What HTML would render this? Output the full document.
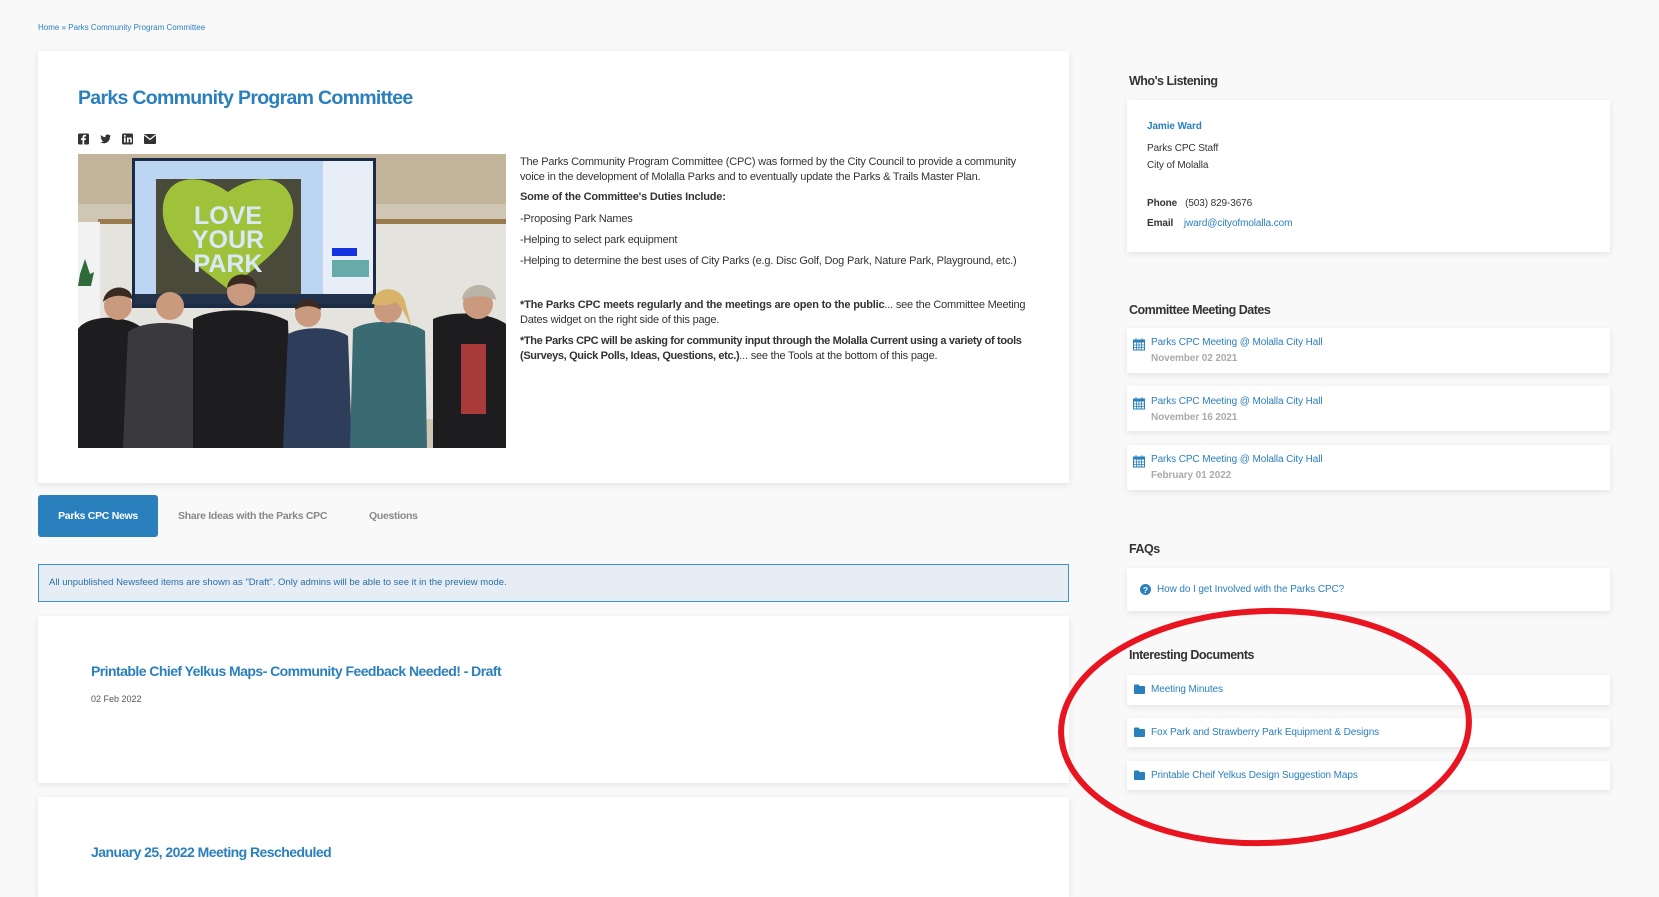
<!DOCTYPE html>
<html><head><meta charset="utf-8"><style>
*{margin:0;padding:0;box-sizing:border-box}
body{width:1659px;height:883px;background:#f9f9f9;font-family:"Liberation Sans",sans-serif;position:relative;overflow:hidden;color:#333}
.a{position:absolute;white-space:nowrap}
.card{position:absolute;background:#fff;box-shadow:0 2px 6px rgba(0,0,0,.09)}
.blue{color:#2a7fbd}
.h{font-size:12.5px;font-weight:bold;color:#333;letter-spacing:-.5px}
.t{font-size:11px;color:#333;letter-spacing:-.2px}
.rl{font-size:10px;letter-spacing:-.1px}
</style></head><body>
<div class="a blue" style="left:38px;top:23px;font-size:8px">Home » Parks Community Program Committee</div>

<div class="card" style="left:38px;top:51px;width:1031px;height:432px"></div>
<div class="a blue" style="left:78px;top:87px;font-size:19.5px;font-weight:bold;letter-spacing:-.7px">Parks Community Program Committee</div>
<svg class="a" style="left:78px;top:133px" width="80" height="12" viewBox="0 0 80 12">
<rect x="0" y="0.5" width="11" height="11" rx="1.5" fill="#333"/><path d="M6.2 11.5V7h1.5l.3-1.7H6.2v-1c0-.5.2-.8.8-.8H8V2c-.3 0-.8-.1-1.3-.1-1.4 0-2.2.8-2.2 2.2v1.2H3V7h1.5v4.5z" fill="#fff"/>
<path d="M33 2.5c-.4.2-.9.3-1.3.4.5-.3.8-.7 1-1.2-.4.3-.9.4-1.4.5a2.2 2.2 0 0 0-3.8 2C25.6 4.1 24 3.3 23 2c-.6 1-.3 2.200.7 2.9-.4 0-.7-.1-1-.3 0 1.1.8 2 1.8 2.2-.3.1-.7.1-1 0 .3.9 1.1 1.5 2.1 1.5-.9.7-2.1 1.1-3.3 1 1 .6 2.2 1 3.4 1 4.1 0 6.4-3.5 6.3-6.6.4-.3.8-.7 1-1.2z" fill="#333"/>
<rect x="44" y="0.5" width="11" height="11" rx="1.5" fill="#333"/><rect x="46" y="4.5" width="1.6" height="5" fill="#fff"/><circle cx="46.8" cy="2.9" r="1" fill="#fff"/><path d="M49 4.5h1.5v.8c.3-.5.9-.9 1.7-.9 1.3 0 1.6.8 1.6 2v3.1h-1.6V6.8c0-.6-.1-1.1-.7-1.1s-.9.4-.9 1.1v2.7H49z" fill="#fff"/>
<rect x="66" y="1" width="12" height="10" rx="1" fill="#333"/><path d="M66.5 2l5.5 4.5L77.5 2" stroke="#fff" stroke-width="1.2" fill="none"/>
</svg>

<svg class="a" style="left:78px;top:154px" width="428" height="294" viewBox="0 0 428 294">
<rect width="428" height="294" fill="#cfc6b4"/>
<rect x="0" y="0" width="428" height="50" fill="#c2b59c"/>
<rect x="20" y="65" width="408" height="200" fill="#e4e3de"/>
<rect x="20" y="65" width="408" height="5" fill="#9b7a50"/>
<rect x="0" y="68" width="22" height="120" fill="#f2f2f2"/>
<path d="M2 120l5-15 5 15 4-2-3 14H0z" fill="#2e6a3a"/>
<rect x="54" y="4" width="244" height="150" fill="#1c2b44"/>
<rect x="57" y="7" width="238" height="143" fill="#bcd5f2"/>
<rect x="245" y="7" width="50" height="135" fill="#e8eef8"/>
<rect x="254" y="94" width="25" height="8" fill="#1432e0"/>
<rect x="254" y="106" width="37" height="17" fill="#6aa"/>
<rect x="78" y="25" width="145" height="115" fill="#4a4a3a"/>
<path d="M150 135C110 105 82 85 85 52c3-30 35-35 65-14 30-21 62-16 65 14 3 33-25 53-65 83z" fill="#9fc23a"/>
<text x="150" y="70" text-anchor="middle" font-family="Liberation Sans" font-weight="bold" font-size="25" fill="#dbe8f8">LOVE</text>
<text x="150" y="94" text-anchor="middle" font-family="Liberation Sans" font-weight="bold" font-size="25" fill="#dbe8f8">YOUR</text>
<text x="150" y="118" text-anchor="middle" font-family="Liberation Sans" font-weight="bold" font-size="25" fill="#dbe8f8">PARK</text>
<rect x="57" y="140" width="238" height="10" fill="#22324a"/>
<g fill="#1d1d20">
<path d="M0 175c10-15 50-15 65 0v119H0z"/>
<path d="M50 178c15-12 55-12 70 0l5 116H45z" fill="#3a3a3d"/>
<path d="M115 165c20-12 70-12 95 2l4 127H115z"/>
<path d="M210 180c15-8 45-8 60 2l4 112H205z" fill="#2d3d5a"/>
<path d="M275 175c15-10 55-10 72 2l2 117H272z" fill="#3b6b72"/>
<path d="M355 165c18-8 55-8 73 5v124H355z"/>
</g>
<g fill="#c99a7e"><circle cx="40" cy="152" r="14"/><circle cx="92" cy="152" r="14"/><circle cx="163" cy="138" r="14"/><circle cx="230" cy="160" r="13"/><circle cx="310" cy="155" r="14"/><circle cx="400" cy="150" r="15"/></g>
<g fill="#3a2a22"><path d="M25 148c2-18 28-20 30-2-8-6-22-6-30 2z"/><path d="M149 134c2-18 28-18 30 0-10-6-20-6-30 0z"/><path d="M217 156c2-14 24-14 26 0-8-5-18-5-26 0z"/></g>
<g fill="#d8b46a"><path d="M294 150c2-20 32-20 34 2l6 22c-6-12-10-20-16-26-8 4-16 4-24 2z"/></g>
<g fill="#b9b3a8"><path d="M384 146c2-20 32-20 34 0-10-5-24-5-34 0z"/></g>
<rect x="383" y="190" width="25" height="70" fill="#a83a3a"/>
</svg>

<div class="a t" style="left:520px;top:155px;line-height:15px">The Parks Community Program Committee (CPC) was formed by the City Council to provide a community<br>voice in the development of Molalla Parks and to eventually update the Parks &amp; Trails Master Plan.</div>
<div class="a t" style="left:520px;top:191px;font-weight:bold">Some of the Committee's Duties Include:</div>
<div class="a t" style="left:520px;top:213px">-Proposing Park Names</div>
<div class="a t" style="left:520px;top:234px">-Helping to select park equipment</div>
<div class="a t" style="left:520px;top:255px">-Helping to determine the best uses of City Parks (e.g. Disc Golf, Dog Park, Nature Park, Playground, etc.)</div>
<div class="a t" style="left:520px;top:298px;line-height:15px"><b>*The Parks CPC meets regularly and the meetings are open to the public</b>... see the Committee Meeting<br>Dates widget on the right side of this page.</div>
<div class="a t" style="left:520px;top:334px;line-height:15px"><b style="letter-spacing:-.35px">*The Parks CPC will be asking for community input through the Molalla Current using a variety of tools<br>(Surveys, Quick Polls, Ideas, Questions, etc.)</b>... see the Tools at the bottom of this page.</div>

<div class="a" style="left:38px;top:495px;width:120px;height:42px;background:#2a7fbd;border-radius:3px;color:#fff;font-size:10.5px;font-weight:bold;text-align:center;line-height:42px;letter-spacing:-.3px">Parks CPC News</div>
<div class="a" style="left:178px;top:495px;line-height:42px;font-size:10.5px;font-weight:bold;color:#888;letter-spacing:-.3px">Share Ideas with the Parks CPC</div>
<div class="a" style="left:369px;top:495px;line-height:42px;font-size:10.5px;font-weight:bold;color:#888;letter-spacing:-.3px">Questions</div>

<div class="a" style="left:38px;top:564px;width:1031px;height:38px;background:#e6edf4;border:1px solid #3d8fd6;font-size:9.5px;line-height:36px;padding-left:10px;color:#2a6fa8">All unpublished Newsfeed items are shown as "Draft". Only admins will be able to see it in the preview mode.</div>

<div class="card" style="left:38px;top:616px;width:1031px;height:167px"></div>
<div class="a blue" style="left:91px;top:663px;font-size:14px;font-weight:bold;letter-spacing:-.55px">Printable Chief Yelkus Maps- Community Feedback Needed! - Draft</div>
<div class="a" style="left:91px;top:694px;font-size:9px;color:#555">02 Feb 2022</div>
<div class="card" style="left:38px;top:797px;width:1031px;height:100px"></div>
<div class="a blue" style="left:91px;top:844px;font-size:14px;font-weight:bold;letter-spacing:-.55px">January 25, 2022 Meeting Rescheduled</div>

<div class="a h" style="left:1129px;top:74px">Who's Listening</div>
<div class="card" style="left:1127px;top:100px;width:483px;height:152px"></div>
<div class="a blue rl" style="left:1147px;top:121px;font-weight:bold">Jamie Ward</div>
<div class="a rl" style="left:1147px;top:143px">Parks CPC Staff</div>
<div class="a rl" style="left:1147px;top:160px">City of Molalla</div>
<div class="a rl" style="left:1147px;top:198px"><b>Phone</b>&nbsp;&nbsp; (503) 829-3676</div>
<div class="a rl" style="left:1147px;top:218px"><b>Email</b>&nbsp;&nbsp;&nbsp; <span class="blue">jward@cityofmolalla.com</span></div>

<div class="a h" style="left:1129px;top:303px">Committee Meeting Dates</div>
<div class="card" style="left:1127px;top:328px;width:483px;height:45px"></div>
<div class="card" style="left:1127px;top:386px;width:483px;height:45px"></div>
<div class="card" style="left:1127px;top:445px;width:483px;height:45px"></div>
<svg width="0" height="0" style="position:absolute"><defs><g id="cal"><rect x="0.5" y="2" width="11" height="10" fill="none" stroke="#2a7fbd"/><rect x="0.5" y="2" width="11" height="2.5" fill="#2a7fbd"/><path d="M3 0v3M9 0v3M0.5 7h11M0.5 9.5h11M3.5 4.5v7.5M6 4.5v7.5M8.5 4.5v7.5" stroke="#2a7fbd" stroke-width=".8"/></g></defs></svg>
<svg class="a" style="left:1133px;top:338px" width="13" height="13"><use href="#cal"/></svg>
<svg class="a" style="left:1133px;top:397px" width="13" height="13"><use href="#cal"/></svg>
<svg class="a" style="left:1133px;top:455px" width="13" height="13"><use href="#cal"/></svg>
<div class="a blue rl" style="left:1151px;top:337px">Parks CPC Meeting @ Molalla City Hall</div>
<div class="a rl" style="left:1151px;top:353px;color:#aaa;font-weight:bold">November 02 2021</div>
<div class="a blue rl" style="left:1151px;top:396px">Parks CPC Meeting @ Molalla City Hall</div>
<div class="a rl" style="left:1151px;top:412px;color:#aaa;font-weight:bold">November 16 2021</div>
<div class="a blue rl" style="left:1151px;top:454px">Parks CPC Meeting @ Molalla City Hall</div>
<div class="a rl" style="left:1151px;top:470px;color:#aaa;font-weight:bold">February 01 2022</div>

<div class="a h" style="left:1129px;top:542px">FAQs</div>
<div class="card" style="left:1127px;top:568px;width:483px;height:43px"></div>
<svg class="a" style="left:1140px;top:584px" width="11" height="11" viewBox="0 0 11 11"><circle cx="5.5" cy="5.5" r="5.5" fill="#2a7fbd"/><text x="5.5" y="9" text-anchor="middle" font-family="Liberation Sans" font-weight="bold" font-size="8.5" fill="#fff">?</text></svg>
<div class="a blue rl" style="left:1157px;top:584px">How do I get Involved with the Parks CPC?</div>

<div class="a h" style="left:1129px;top:648px">Interesting Documents</div>
<div class="card" style="left:1127px;top:675px;width:483px;height:30px"></div>
<div class="card" style="left:1127px;top:718px;width:483px;height:29px"></div>
<div class="card" style="left:1127px;top:761px;width:483px;height:29px"></div>
<svg width="0" height="0" style="position:absolute"><defs><path id="fold" d="M0 1.5Q0 .5 1 .5h3.5l1.2 1.5H10q1 0 1 1V9q0 1-1 1H1q-1 0-1-1z" fill="#2a7fbd"/></defs></svg>
<svg class="a" style="left:1134px;top:684px" width="12" height="11"><use href="#fold"/></svg>
<svg class="a" style="left:1134px;top:727px" width="12" height="11"><use href="#fold"/></svg>
<svg class="a" style="left:1134px;top:770px" width="12" height="11"><use href="#fold"/></svg>
<div class="a blue rl" style="left:1151px;top:684px">Meeting Minutes</div>
<div class="a blue rl" style="left:1151px;top:727px">Fox Park and Strawberry Park Equipment &amp; Designs</div>
<div class="a blue rl" style="left:1151px;top:770px">Printable Cheif Yelkus Design Suggestion Maps</div>

<svg class="a" style="left:0;top:0" width="1659" height="883"><ellipse cx="1265" cy="727" rx="204" ry="116" fill="none" stroke="#e8141f" stroke-width="6" transform="rotate(-2 1265 727)"/></svg>
</body></html>
